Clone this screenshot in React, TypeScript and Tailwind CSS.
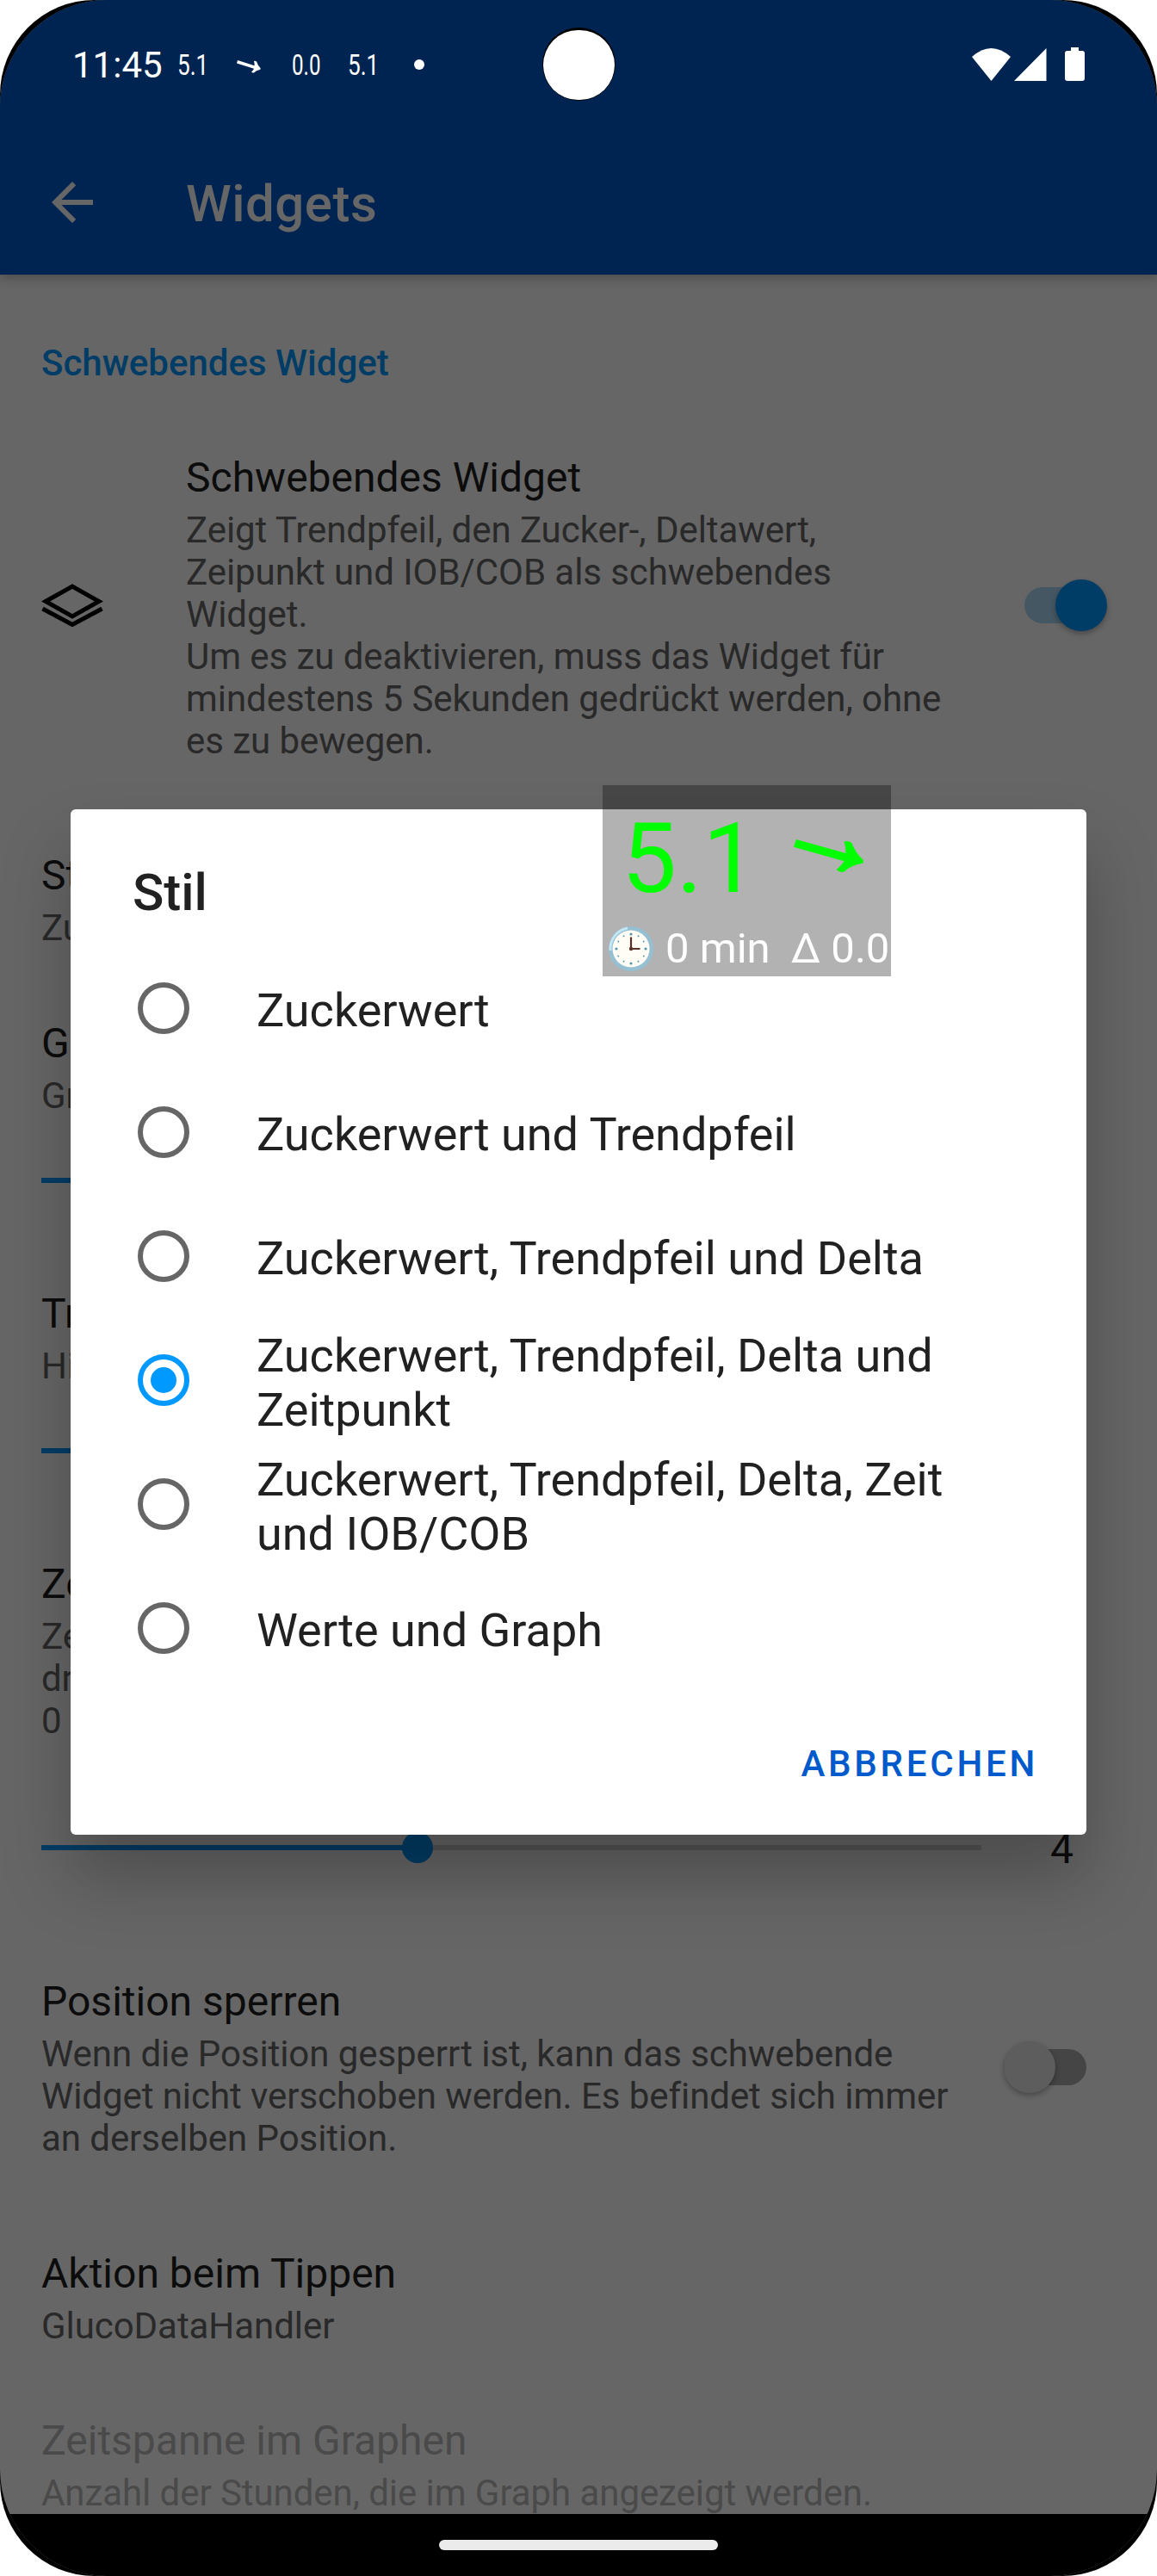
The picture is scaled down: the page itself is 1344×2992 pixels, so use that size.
const options = [
  "Zuckerwert",
  "Zuckerwert und Trendpfeil",
  "Zuckerwert, Trendpfeil und Delta",
  "Zuckerwert, Trendpfeil, Delta und Zeitpunkt",
  "Zuckerwert, Trendpfeil, Delta, Zeit und IOB/COB",
  "Werte und Graph",
];
const selected = 3;

function TrendArrow({ className }: { className: string }) {
  return (
    <svg viewBox="0 0 84 40" preserveAspectRatio="none" fill="currentColor" className={className}>
      <path d="M3 0 62 16.500Q62 9 60 2.500Q65 1 69 4Q74 17 82.500 24Q83.500 26 82 28.500Q67 31 60 38.500Q54 40 51 36Q57 31 60 26L0 9Z" />
    </svg>
  );
}

function Clock() {
  return (
    <svg viewBox="0 0 54 54" className="h-[54px] w-[54px] shrink-0">
      <circle cx="27" cy="27" r="26" fill="#95bfd2" />
      <path d="M3 29A24.500 24.500 0 0 1 23 3" stroke="#c3e6f3" strokeWidth="3" fill="none" />
      <circle cx="27" cy="27" r="21.500" fill="#fffdf5" />
      {[0, 30, 60, 90, 120, 150, 180, 210, 240, 270, 300, 330].map((a) => (
        <circle key={a} cx="27" cy="10" r={a % 90 === 0 ? 1.6 : 1} fill="#5795ad" transform={`rotate(${a} 27 27)`} />
      ))}
      <path d="M27 13.500V27H37.500" stroke="#5a3327" strokeWidth="2.200" fill="none" />
      <circle cx="27" cy="27" r="2.200" fill="#5a3327" />
    </svg>
  );
}

function Pref({ title, lines, className, disabled }: { title: string; lines: string[]; className: string; disabled?: boolean }) {
  return (
    <div className={`whitespace-nowrap pb-px ${className}`}>
      <div className={`text-[48px] leading-[56px] ${disabled ? "text-[#4a4a4a]" : "text-[#0c0c0c]"}`}>{title}</div>
      <div className={`mt-2 text-[42px] leading-[49px] tracking-[-0.0015em] ${disabled ? "text-[#4a4a4a]" : "text-[#292929]"}`}>
        {lines.map((l) => (
          <div key={l}>{l}</div>
        ))}
      </div>
    </div>
  );
}

function Line({ className }: { className: string }) {
  return <div className={`ml-12 h-[6px] w-[1092px] bg-[#003d66] ${className}`} />;
}

export default function App() {
  return (
    <div className="relative h-[2992px] w-[1344px] overflow-hidden bg-white font-['Roboto',sans-serif]">
      <div className="h-full w-full overflow-hidden rounded-[110px] bg-black">
        <div className="flex h-full w-full flex-col overflow-hidden rounded-[124px] bg-[#666666]">
          <header className="relative z-10 h-[319px] shrink-0 bg-[#002451] shadow-[0_4px_12px_rgba(0,0,0,0.25)]">
            <div className="flex h-[150px] items-center pl-[84px] text-white">
              <span className="w-[122px] text-[42px] leading-[49px]">11:45</span>
              <span className="block w-[69px] origin-left scale-x-[0.77] text-[34px] leading-[40px]">5.1</span>
              <TrendArrow className="mt-1 h-[15px] w-[28px]" />
              <span className="ml-9 block w-[65px] origin-left scale-x-[0.71] text-[34px] leading-[40px]">0.0</span>
              <span className="block w-[77px] origin-left scale-x-[0.77] text-[34px] leading-[40px]">5.1</span>
              <div className="size-3 rounded-full bg-white" />
              <svg viewBox="0 0 132 40" className="ml-auto mr-[83px] h-[40px] w-[132px]" fill="white">
                <path d="M0 11Q22.500 -9 45 11L22.500 39Z" />
                <path d="M49 39H86.500V1Z" />
                <path d="M115 0h9v4h4q3 0 3 3v29q0 3-3 3h-17q-3 0-3-3v-29q0-3 3-3h4z" />
              </svg>
            </div>
            <div className="flex h-[170px] items-center pl-12 text-[#666666]">
              <svg viewBox="0 0 24 24" className="size-[72px]" fill="currentColor">
                <path d="M20 11H7.830l5.590-5.590L12 4l-8 8 8 8 1.410-1.410L7.830 13H20z" />
              </svg>
              <h1 className="ml-24 mt-1 text-[60px] font-medium leading-[70px] tracking-[0.008em]">Widgets</h1>
            </div>
          </header>

          <main className="h-[2601px] shrink-0 overflow-hidden">
            <h2 className="mt-[78px] pl-12 text-[42px] font-medium leading-[49px] text-[#003d66]">Schwebendes Widget</h2>
            <div className="mt-[81px] flex h-[358px] items-center pl-12">
              <svg viewBox="0 0 72 50" className="mb-[6px] h-[50px] w-[72px]" fill="none" stroke="black" strokeWidth="5">
                <path d="M5 20.500 36 3 67 20.500 36 38Z" />
                <path d="M1.500 29 36 47.500 70.500 29" />
              </svg>
              <Pref
                className="ml-24 w-[974px]"
                title="Schwebendes Widget"
                lines={["Zeigt Trendpfeil, den Zucker-, Deltawert,", "Zeipunkt und IOB/COB als schwebendes", "Widget.", "Um es zu deaktivieren, muss das Widget für", "mindestens 5 Sekunden gedrückt werden, ohne", "es zu bewegen."]}
              />
              <div className="mb-[6px] flex h-[42px] w-[90px] items-center justify-end rounded-full bg-[#455763]">
                <div className="-mr-[6px] size-[60px] shrink-0 rounded-full bg-[#003d66] shadow-[0_3px_6px_rgba(0,0,0,0.3)]" />
              </div>
            </div>
            <Pref className="mt-[104px] pl-12" title="Stil" lines={["Zuckerwert"]} />
            <Pref className="mt-[81px] pl-12" title="Größe" lines={["Größe"]} />
            <Line className="mt-[70px]" />
            <Pref className="mt-[124px] pl-12" title="Transparenz" lines={["Hintergrund"]} />
            <Line className="mt-[70px]" />
            <Pref className="mt-[124px] pl-12" title="Zeit" lines={["Zeit", "drücken", "0 Sekunden"]} />
            <div className="mt-[97px] flex h-[50px] items-center pl-12">
              <div className="flex h-[6px] w-[1092px] items-center bg-[#565656]">
                <div className="h-[6px] w-[437px] bg-[#003d66]" />
                <div className="-ml-[18px] size-9 rounded-full bg-[#003d66]" />
              </div>
              <span className="ml-20 mt-[3px] text-[48px] leading-[56px] text-[#0c0c0c]">4</span>
            </div>
            <div className="mt-[126px] flex items-center pl-12">
              <Pref
                className="w-[1118px]"
                title="Position sperren"
                lines={["Wenn die Position gesperrt ist, kann das schwebende", "Widget nicht verschoben werden. Es befindet sich immer", "an derselben Position."]}
              />
              <div className="mb-[5px] flex h-[42px] w-[96px] items-center rounded-full bg-[#454545]">
                <div className="size-[60px] shrink-0 rounded-full bg-[#5d5d5d] shadow-[0_3px_6px_rgba(0,0,0,0.3)]" />
              </div>
            </div>
            <Pref className="mt-[104px] pl-12" title="Aktion beim Tippen" lines={["GlucoDataHandler"]} />
            <Pref className="mt-[80px] pl-12" title="Zeitspanne im Graphen" lines={["Anzahl der Stunden, die im Graph angezeigt werden."]} disabled />
          </main>
          <div className="flex h-[72px] shrink-0 items-center justify-center bg-black">
            <div className="h-3 w-[324px] rounded-full bg-[#ebebeb]" />
          </div>
        </div>
      </div>

      <div className="absolute left-[630px] top-8 z-10 flex h-[85px] w-[85px] items-end justify-center rounded-full bg-black">
        <div className="mb-px h-[81px] w-[83px] rounded-full bg-white" />
      </div>

      <section className="absolute left-[82px] top-[940px] z-20 flex h-[1191px] w-[1180px] flex-col rounded-[6px] bg-white pl-[72px] text-[#212121] shadow-[0_50px_80px_rgba(0,0,0,0.25)]">
        <h2 className="mt-[62px] text-[60px] font-medium leading-[70px]">Stil</h2>
        <ul className="mt-[27px]">
          {options.map((o, i) => (
            <li key={o} className="flex h-36 items-center pl-[6px]">
              <span className={`flex size-[60px] shrink-0 items-center justify-center rounded-full border-[6px] ${i === selected ? "border-[#0099ff]" : "border-[#666666]"}`}>
                {i === selected && <span className="size-[30px] rounded-full bg-[#0099ff]" />}
              </span>
              <span className="ml-[78px] mt-[5px] w-[860px] text-[54px] leading-[63px]">{o}</span>
            </li>
          ))}
        </ul>
        <button className="mr-[56px] mt-[61px] self-end text-[42px] font-medium leading-[49px] tracking-[0.0892em] text-[#005acb]">ABBRECHEN</button>
      </section>

      <aside className="absolute left-[700px] top-[912px] z-30 h-[222px] w-[335px] bg-black/30">
        <div className="flex h-[162px] items-start pl-[22px] text-[#00ff00]">
          <span className="mt-[18px] text-[114px] leading-[134px]">5.1</span>
          <TrendArrow className="ml-[42px] mt-[63px] h-[39px] w-[82px]" />
        </div>
        <div className="flex h-[56px] items-center whitespace-nowrap pl-[6px] text-[49px] leading-[56px] text-white">
          <Clock />
          <span className="ml-[13px]">0 min</span>
          <span className="ml-[24px]">Δ 0.0</span>
        </div>
      </aside>
    </div>
  );
}
